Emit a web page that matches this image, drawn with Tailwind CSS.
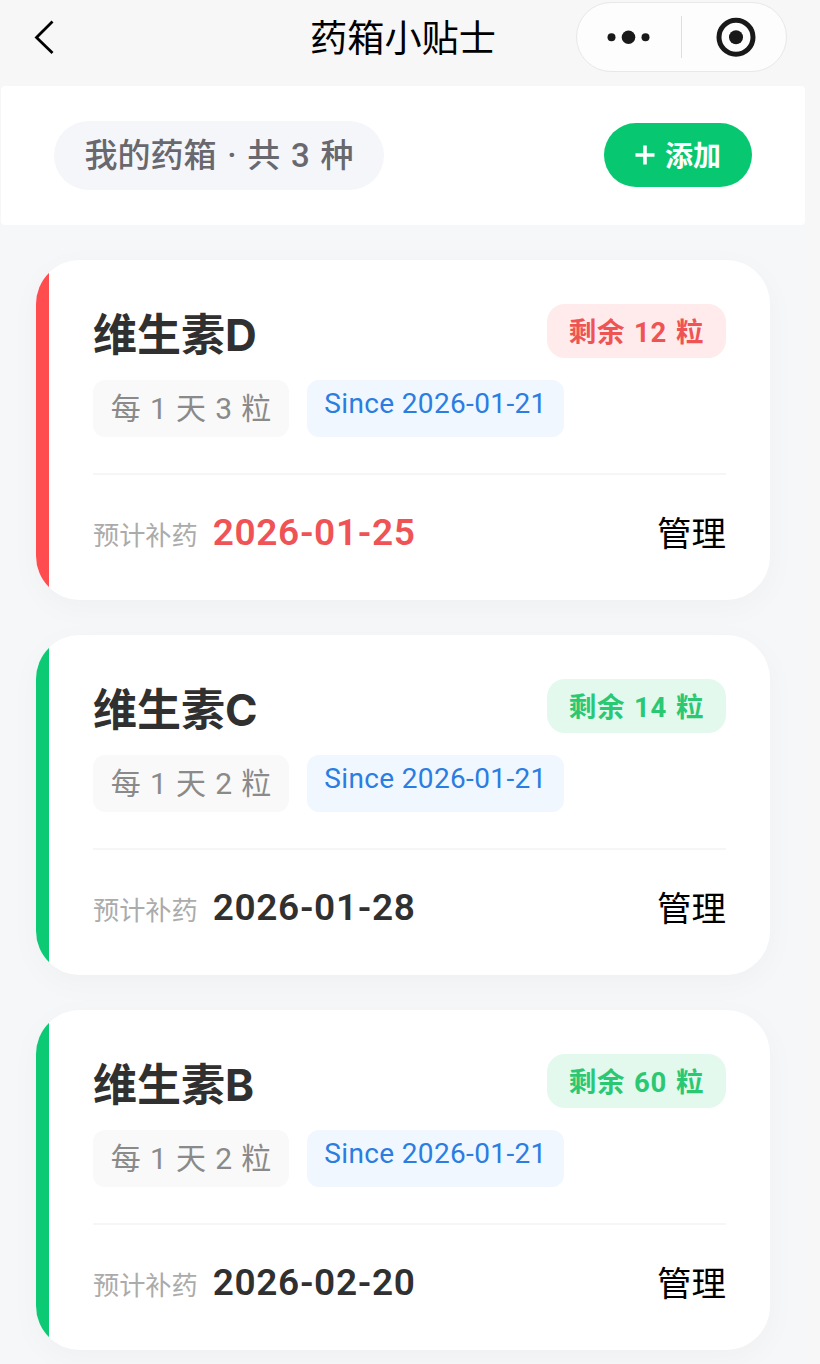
<!DOCTYPE html>
<html lang="zh-CN">
<head>
  <meta charset="UTF-8" />
  <meta name="viewport" content="width=device-width, initial-scale=1" />
  <title>药箱小贴士</title>
  <script src="https://cdn.jsdelivr.net/npm/@tailwindcss/browser@4"></script>
  <style>
    body {
      font-family: Roboto, 'Noto Sans CJK SC', sans-serif;
    }
  </style>
</head>
<body class="bg-[#f7f7f7] h-[1364px] overflow-hidden whitespace-nowrap">
  <!-- Nav bar -->
  <header class="h-[86px] w-[806px] grid grid-cols-[1fr_auto_1fr] items-start">
    <svg class="mt-[19px] ml-[32px] w-6 h-9" viewBox="0 0 24 36" fill="none" stroke="#000" stroke-width="2.8">
      <path d="M20.5 2.5 L4.5 18.5 L20.5 34" />
    </svg>
    <h1 class="mt-[9px] h-[60px] leading-[60px] text-[37.2px] text-black">药箱小贴士</h1>
    <div class="justify-self-end mt-[2px] mr-[19px] w-[211px] h-[70px] rounded-full bg-[#fdfdfd] border border-[#e8e8e8] flex items-center">
      <svg class="w-[104px] h-10" viewBox="0 0 104 40" fill="#191919">
        <circle cx="34.5" cy="20.3" r="4" />
        <circle cx="51.5" cy="20.3" r="6.8" />
        <circle cx="68.5" cy="20.3" r="4" />
      </svg>
      <span class="w-px h-[42px] bg-[#dedede]"></span>
      <svg class="w-[104px] h-10" viewBox="0 0 104 40">
        <circle cx="54" cy="20.3" r="17" fill="none" stroke="#191919" stroke-width="5" />
        <circle cx="54" cy="20.3" r="7" fill="#191919" />
      </svg>
    </div>
  </header>

  <!-- Summary bar -->
  <section class="ml-px w-[804px] h-[139px] bg-white rounded-sm flex items-center justify-between pl-[53px] pr-[53px]">
    <div class="w-[330px] h-[69px] rounded-full bg-[#f5f6fa] flex items-center justify-center text-[33px] font-medium text-[#68686e]"><span id="summary" class="[word-spacing:2.5px]"></span></div>
    <button class="w-[148px] h-[64px] mb-px rounded-full bg-[#07c870] text-white text-[28px] font-bold flex items-center justify-center gap-[10px]">
      <svg class="w-5 h-5" viewBox="0 0 20 20" stroke="#fff" stroke-width="3.6"><path d="M10 0.5V19.5M0.5 10H19.5" /></svg>
      <span class="pt-[3px]">添加</span>
    </button>
  </section>

  <main id="list" class="w-[806px] h-[1140px] bg-[#f5f7f9] pt-[35px] pl-[36px] flex flex-col gap-[35px]"></main>

  <script>
    const meds = [
      { name: '维生素D', left: 12, dose: 3, since: '2026-01-21', refill: '2026-01-25', low: true },
      { name: '维生素C', left: 14, dose: 2, since: '2026-01-21', refill: '2026-01-28', low: false },
      { name: '维生素B', left: 60, dose: 2, since: '2026-01-21', refill: '2026-02-20', low: false }
    ];

    function cardHtml(med) {
      const bar = med.low ? 'bg-[#ff4d4f]' : 'bg-[#0cc974]';
      const badge = med.low ? 'bg-[#ffebeb] text-[#ef5454]' : 'bg-[#e3f9ee] text-[#2bc873]';
      const date = med.low ? 'text-[#ef5355]' : 'text-[#303030]';
      return `
        <article class="w-[734px] h-[340px] shrink-0 rounded-[44px] shadow-[0_8px_32px_rgba(0,0,0,0.03)]">
          <div class="h-full flex rounded-[44px] overflow-hidden bg-white">
            <div class="w-[13px] ${bar}"></div>
            <div class="flex-1 pl-[44px] pr-[44px] pt-[44px]">
              <div class="flex justify-between h-[76px]">
                <h2 class="h-[60px] leading-[62px] text-[44px] font-bold text-[#303030] font-[Inter,'Noto_Sans_CJK_SC',sans-serif]">${med.name}</h2>
                <span class="w-[179px] h-[54px] pt-[3px] rounded-[18px] flex items-center justify-center text-[27.5px] tracking-[0.7px] [word-spacing:1.5px] font-bold ${badge}">剩余 ${med.left} 粒</span>
              </div>
              <div class="flex gap-[18px] h-[57px]">
                <span class="w-[196px] rounded-[12px] bg-[#f9f9f9] text-[#8a8a8a] text-[30px] [word-spacing:1.7px] flex items-center justify-center">每 1 天 ${med.dose} 粒</span>
                <span class="w-[257px] rounded-[12px] bg-[#f1f7ff] text-[#2a7de1] text-[28px] tracking-[0.35px] leading-[47px] text-center">Since ${med.since}</span>
              </div>
              <div class="mt-[36px] border-t-2 border-[#f6f6f6] flex items-center justify-between h-[118px]">
                <div class="flex items-baseline">
                  <span class="text-[26.2px] text-[#ababab]">预计补药</span>
                  <span class="ml-[15px] text-[37px] tracking-[0.65px] font-semibold ${date}">${med.refill}</span>
                </div>
                <a class="pt-[3px] text-[34.5px] text-black">管理</a>
              </div>
            </div>
          </div>
        </article>`;
    }

    document.getElementById('summary').textContent = '我的药箱 · 共 ' + meds.length + ' 种';
    document.getElementById('list').innerHTML = meds.map(cardHtml).join('');
  </script>
</body>
</html>
